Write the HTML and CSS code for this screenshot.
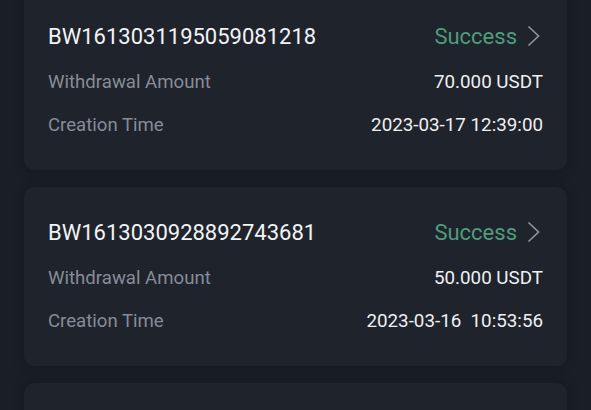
FILE: index.html
```html
<!DOCTYPE html>
<html lang="en">

<head>
    <meta charset="UTF-8">
    <meta name="viewport" content="width=device-width, initial-scale=1.0">
    <title>Withdrawal Records</title>
    <link rel="stylesheet" href="styles.css">
</head>

<body>
    <div class="record-list">
        <div class="record">
            <div class="record-head">
                <span class="order-no">BW1613031195059081218</span>
                <span class="status">Success
                    <svg class="chevron" width="13" height="22" viewBox="0 0 13 22"><path d="M1.5 1.5l10 9.5-10 9.5" /></svg>
                </span>
            </div>
            <div class="record-row">
                <span class="label">Withdrawal Amount</span>
                <span class="value">70.000 USDT</span>
            </div>
            <div class="record-row">
                <span class="label">Creation Time</span>
                <span class="value">2023-03-17 12:39:00</span>
            </div>
        </div>

        <div class="record">
            <div class="record-head">
                <span class="order-no">BW1613030928892743681</span>
                <span class="status">Success
                    <svg class="chevron" width="13" height="22" viewBox="0 0 13 22"><path d="M1.5 1.5l10 9.5-10 9.5" /></svg>
                </span>
            </div>
            <div class="record-row">
                <span class="label">Withdrawal Amount</span>
                <span class="value">50.000 USDT</span>
            </div>
            <div class="record-row">
                <span class="label">Creation Time</span>
                <span class="value">2023-03-16 &nbsp;10:53:56</span>
            </div>
        </div>

        <div class="record"></div>
    </div>
</body>

</html>
```

FILE: styles.css
```css
body {
    margin: 0;
    background-color: #1a1e26;
    font-family: Roboto, "Liberation Sans", sans-serif;
    overflow: hidden;
}

.record-list {
    margin-top: -9px;
    padding: 0 24px;
    display: flex;
    flex-direction: column;
    gap: 17px;
}

.record {
    display: flex;
    flex-direction: column;
    background-color: #1f232c;
    border-radius: 10px;
    padding: 32px 24px 32px;
    box-shadow: 0 0 12px rgba(0, 0, 0, 0.25);
    min-height: 115px;
}

.record-head,
.record-row {
    display: flex;
    justify-content: space-between;
    align-items: center;
    height: 26px;
}

.record-head {
    margin-bottom: 3px;
}

.record-row {
    margin-top: 17px;
}

.order-no {
    color: #f2f3f5;
    font-size: 22px;
}

.status {
    display: flex;
    align-items: center;
    gap: 10px;
    margin-right: 3px;
    color: #4f9c7c;
    font-size: 22px;
}

.chevron {
    fill: none;
    stroke: #8c929c;
    stroke-width: 1.7;
}

.label {
    color: #868c97;
    font-size: 18.6px;
}

.value {
    color: #eef0f2;
    font-size: 18.8px;
}
```
